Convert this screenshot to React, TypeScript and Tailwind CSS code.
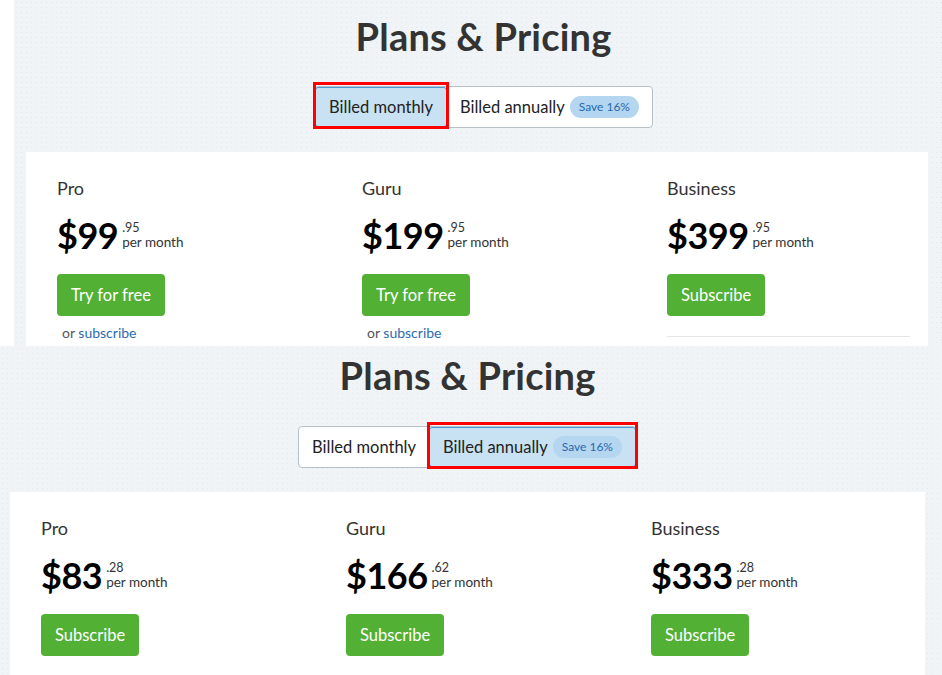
import React from 'react';

type Plan = { name: string; whole: string; cents: string; cta: string; sub?: boolean; rule?: boolean };

const monthly: Plan[] = [
  { name: 'Pro', whole: '$99', cents: '.95', cta: 'Try for free', sub: true },
  { name: 'Guru', whole: '$199', cents: '.95', cta: 'Try for free', sub: true },
  { name: 'Business', whole: '$399', cents: '.95', cta: 'Subscribe', rule: true },
];

const annual: Plan[] = [
  { name: 'Pro', whole: '$83', cents: '.28', cta: 'Subscribe' },
  { name: 'Guru', whole: '$166', cents: '.62', cta: 'Subscribe' },
  { name: 'Business', whole: '$333', cents: '.28', cta: 'Subscribe' },
];

const dotted =
  'bg-[#f0f4f7] bg-[radial-gradient(#e1e7ec_0.8px,transparent_0.9px)] bg-[size:5px_5px]';

const Badge = () => (
  <span className="ml-[5px] inline-flex h-[22px] items-center rounded-full bg-[#b5d6f0] px-[9px] text-[12px] text-[#2668ad]">
    Save 16%
  </span>
);

const Toggle = ({ annually }: { annually: boolean }) => {
  const seg = 'relative flex h-full items-center px-[13px] text-[16.5px] text-[#222]';
  const active = 'bg-[#c8e1f3] border border-[#4a98d8] rounded-[3px]';
  const marker = (
    <span className="pointer-events-none absolute -left-[3px] -right-[3px] -top-[6px] -bottom-[3px] border-[3px] border-[#ff0000]" />
  );
  return (
    <div className="inline-flex h-[42px] items-stretch rounded-[4px] border border-[#b8c0c8] bg-white">
      <div className={`${seg} ${annually ? '' : active}`}>
        Billed monthly
        {!annually && marker}
      </div>
      <div className={`${seg} pr-[13px] ${annually ? active : ''}`}>
        Billed annually
        <Badge />
        {annually && marker}
      </div>
    </div>
  );
};

const Column = ({ plan }: { plan: Plan }) => (
  <div className="flex w-[243px] shrink-0 flex-col items-start">
    <div className="text-[18px] leading-[24px] text-[#333]">{plan.name}</div>
    <div className="mt-[15px] flex items-center">
      <span className="text-[36px] font-bold leading-[40px] tracking-[-0.5px] text-black">{plan.whole}</span>
      <span className="ml-[4px] flex flex-col text-[#333]">
        <span className="text-[12.5px] leading-[15px]">{plan.cents}</span>
        <span className="text-[13.5px] leading-[15px]">per month</span>
      </span>
    </div>
    <button className="mt-[19px] h-[42px] rounded-[4px] bg-[#52b035] px-[14px] text-[16.5px] text-white">
      {plan.cta}
    </button>
    {plan.sub && (
      <div className="ml-[5px] mt-[7px] text-[14px] leading-[20px] text-[#555]">
        or <span className="text-[#2a6cb3]">subscribe</span>
      </div>
    )}
    {plan.rule && <div className="mt-[20px] w-full border-t border-[#e3e6e8]" />}
  </div>
);

const Cards = ({ plans }: { plans: Plan[] }) => (
  <div className="flex gap-[62px]">
    {plans.map((p) => (
      <Column key={p.name} plan={p} />
    ))}
  </div>
);

const Title = () => (
  <h1 className="text-[38px] font-bold leading-[40px] tracking-[0.2px] text-[#333]">Plans &amp; Pricing</h1>
);

export default function App() {
  return (
    <div
      className="h-[675px] w-[942px] overflow-hidden bg-white"
      style={{ fontFamily: 'Lato, "Noto Sans", sans-serif' }}
    >
      {/* monthly */}
      <section className={`ml-[14px] flex h-[346px] flex-col overflow-hidden ${dotted}`}>
        <div className="flex flex-col items-center pl-[11px] pt-[16px]">
          <Title />
          <div className="mt-[30px]">
            <Toggle annually={false} />
          </div>
        </div>
        <div className="ml-[12px] mt-[24px] w-[902px] flex-1 bg-white pl-[31px] pt-[24px]">
          <Cards plans={monthly} />
        </div>
      </section>

      {/* annually */}
      <section className={`flex h-[329px] flex-col overflow-hidden ${dotted}`}>
        <div className="flex w-[935px] flex-col items-center pt-[9px]">
          <Title />
          <div className="mt-[31px]">
            <Toggle annually />
          </div>
        </div>
        <div className="ml-[10px] mt-[24px] w-[915px] flex-1 bg-white pl-[31px] pt-[24px]">
          <Cards plans={annual} />
        </div>
      </section>
    </div>
  );
}
